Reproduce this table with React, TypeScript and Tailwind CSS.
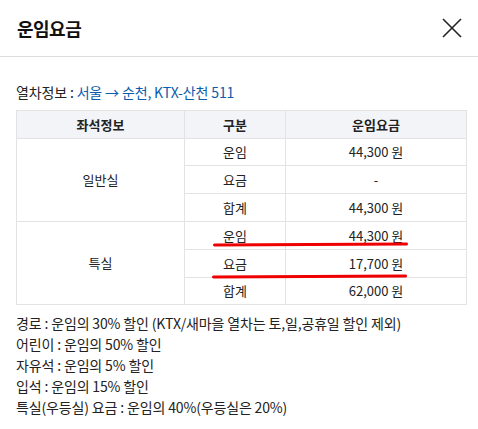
import React from "react";

const font = { fontFamily: '"Noto Sans CJK KR", "Noto Sans", sans-serif' };

export default function App() {
  const cell = "border border-[#e3e3e3] text-center";
  return (
    <div className="w-[478px] h-[429px] bg-white text-[#222] overflow-hidden" style={font}>
      {/* Header */}
      <div className="h-[57px] flex items-center justify-between pl-[17px] pr-[15px] border-b border-[#dcdcdc]">
        <h1 className="text-[18px] font-bold tracking-[-0.5px] leading-none text-[#111]">운임요금</h1>
        <button className="w-[22px] h-[22px] flex items-center justify-center" aria-label="닫기">
          <svg width="20" height="20" viewBox="0 0 20 20" fill="none" stroke="#222" strokeWidth="1.6">
            <path d="M1 1 L19 19 M19 1 L1 19" />
          </svg>
        </button>
      </div>

      <div className="px-4">
        {/* Train info */}
        <p className="mt-[25px] text-[14px] leading-[20px] tracking-[-0.15px]">
          열차정보 : <span className="text-[#0b5cad]">서울 → 순천, KTX-산천 511</span>
        </p>

        {/* Table */}
        <div className="relative mt-[8px]">
          <table className="w-[451px] border-collapse text-[13px] tracking-[0px] table-fixed">
            <colgroup>
              <col className="w-[168px]" />
              <col className="w-[101px]" />
              <col />
            </colgroup>
            <thead>
              <tr className="h-[28px] bg-[#f3f4f7]">
                <th className={`${cell} font-bold`}>좌석정보</th>
                <th className={`${cell} font-bold`}>구분</th>
                <th className={`${cell} font-bold`}>운임요금</th>
              </tr>
            </thead>
            <tbody>
              <tr className="h-[27px]">
                <td className={cell} rowSpan={3}>일반실</td>
                <td className={cell}>운임</td>
                <td className={cell}>44,300 원</td>
              </tr>
              <tr className="h-[28px]">
                <td className={cell}>요금</td>
                <td className={cell}>-</td>
              </tr>
              <tr className="h-[28px]">
                <td className={cell}>합계</td>
                <td className={cell}>44,300 원</td>
              </tr>
              <tr className="h-[28px]">
                <td className={cell} rowSpan={3}>특실</td>
                <td className={cell}>운임</td>
                <td className={cell}>44,300 원</td>
              </tr>
              <tr className="h-[28px]">
                <td className={cell}>요금</td>
                <td className={cell}>17,700 원</td>
              </tr>
              <tr className="h-[27px]">
                <td className={cell}>합계</td>
                <td className={cell}>62,000 원</td>
              </tr>
            </tbody>
          </table>
          {/* red annotation underlines */}
          <div className="absolute left-[197px] top-[133px] w-[195px] h-[2.5px] bg-[#ee0000] rounded-full -rotate-[0.3deg]" />
          <div className="absolute left-[196px] top-[165px] w-[195px] h-[2.5px] bg-[#ee0000] rounded-full -rotate-[0.3deg]" />
        </div>

        {/* Notes */}
        <ul className="mt-[8px] text-[14px] leading-[21px] tracking-[-0.15px]">
          <li>경로 : 운임의 30% 할인 (KTX/새마을 열차는 토,일,공휴일 할인 제외)</li>
          <li>어린이 : 운임의 50% 할인</li>
          <li>자유석 : 운임의 5% 할인</li>
          <li>입석 : 운임의 15% 할인</li>
          <li>특실(우등실) 요금 : 운임의 40%(우등실은 20%)</li>
        </ul>
      </div>
    </div>
  );
}
